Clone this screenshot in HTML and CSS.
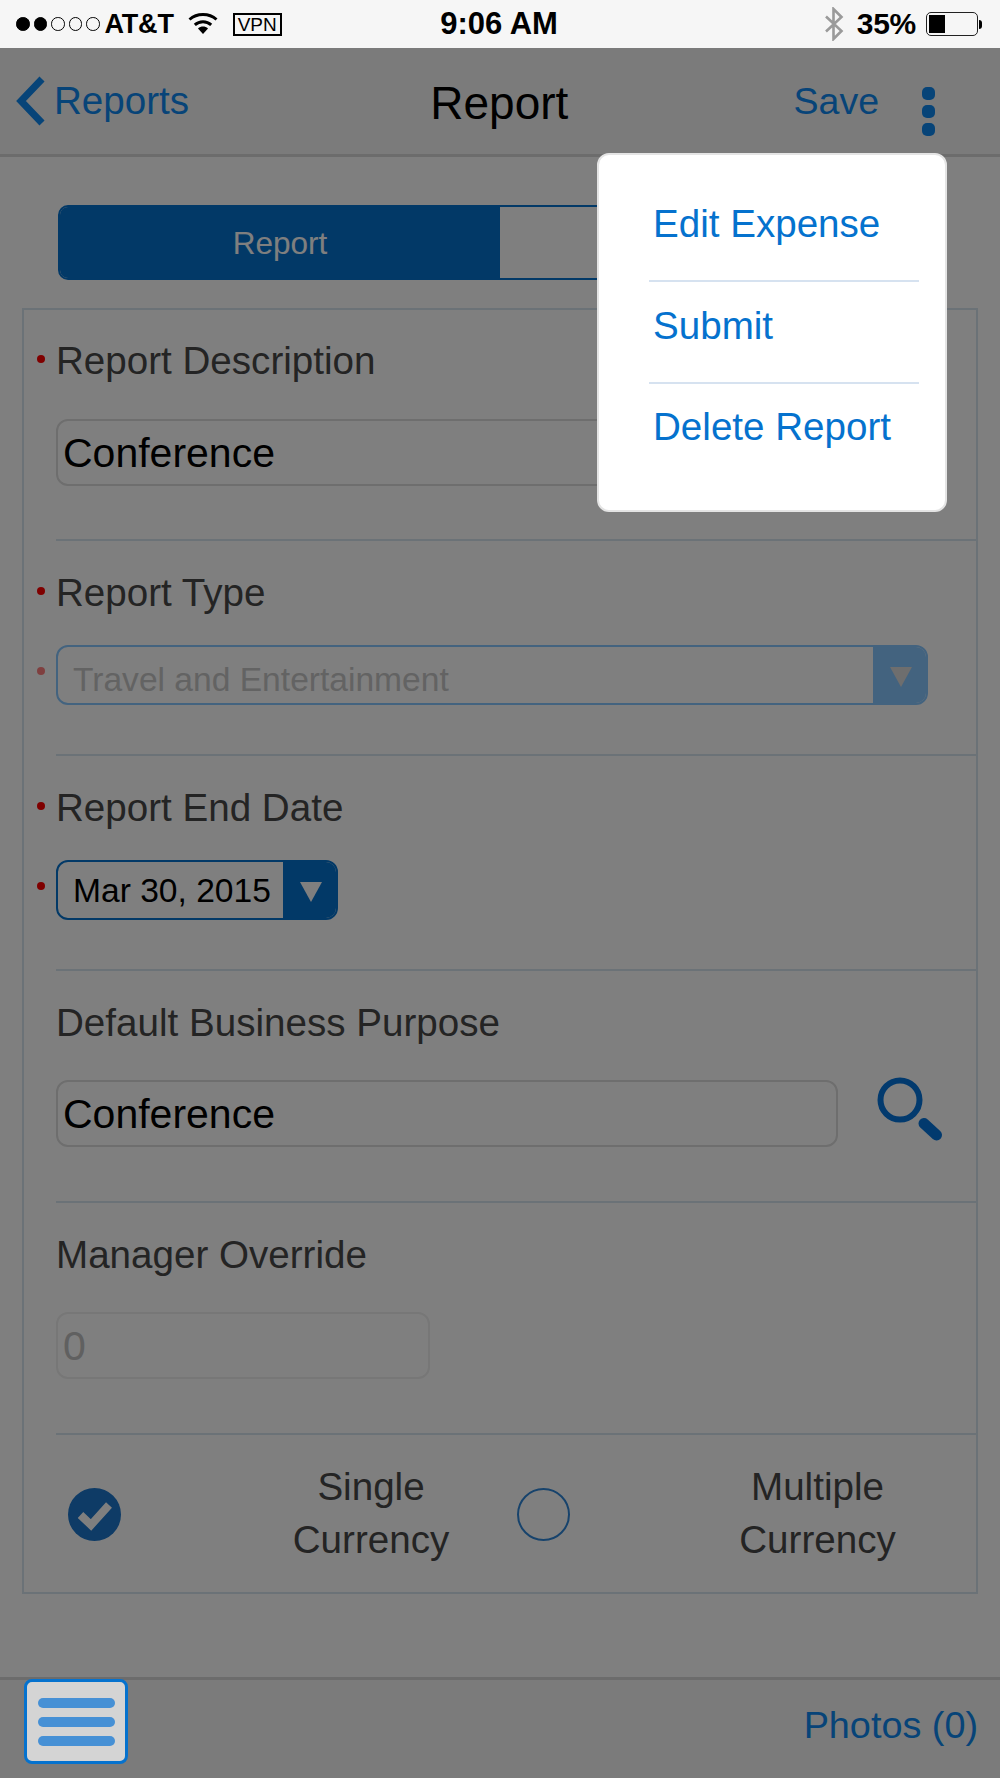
FILE: index.html
```html
<!DOCTYPE html>
<html lang="en">
<head>
<meta charset="utf-8">
<title>Report</title>
<link rel="stylesheet" href="styles.css">
</head>
<body>
<div class="app">
  <header class="status">
    <div class="status-left">
      <span class="signal"><i class="on"></i><i class="on"></i><i></i><i></i><i></i></span>
      <span class="carrier">AT&amp;T</span>
      <svg class="wifi" viewBox="0 0 30 24" aria-hidden="true">
        <path d="M1.5 7.5C9 .8 21 .8 28.5 7.5" fill="none" stroke="#000" stroke-width="3"/>
        <path d="M6.8 12.8C11.5 8.6 18.5 8.6 23.2 12.8" fill="none" stroke="#000" stroke-width="3"/>
        <path d="M10 16.5c3-2.6 7-2.6 10 0L15 22z" fill="#000"/>
      </svg>
      <span class="vpn">VPN</span>
    </div>
    <div class="clock">9:06 AM</div>
    <div class="status-right">
      <svg class="bt" viewBox="0 0 20 34" aria-hidden="true">
        <path d="M2 9.5 17.5 24 9.5 32V2l8 8L2 24.5" fill="none" stroke="#9a9a9a" stroke-width="2.6"/>
      </svg>
      <span class="pct">35%</span>
      <span class="battery"><span class="battery-fill"></span></span>
      <span class="battery-nub"></span>
    </div>
  </header>

  <nav class="nav">
    <a class="back">
      <svg class="chevron" viewBox="0 0 30 50" aria-hidden="true">
        <path d="M26 3 5 25l21 22" fill="none" stroke="currentColor" stroke-width="7"/>
      </svg>
      <span>Reports</span>
    </a>
    <h1 class="title">Report</h1>
    <a class="save">Save</a>
    <span class="kebab"><i></i><i></i><i></i></span>
  </nav>

  <main class="content">
    <div class="segments">
      <div class="segment segment-on">Report</div>
      <div class="segment"></div>
    </div>

    <section class="panel">
      <div class="row row-first">
        <div class="label"><i class="req"></i>Report Description</div>
        <div class="field-line">
          <div class="input">Conference</div>
          <svg class="search" viewBox="0 0 66 66" aria-hidden="true"><circle cx="23" cy="23" r="19.5" fill="none" stroke="currentColor" stroke-width="6"/><path d="M47 46.5 59.500 58" fill="none" stroke="currentColor" stroke-width="11" stroke-linecap="round"/></svg>
        </div>
      </div>

      <div class="row">
        <div class="label"><i class="req"></i>Report Type</div>
        <div class="select-line">
          <i class="req req-dim"></i>
          <div class="select select-off">
            <span class="select-text">Travel and Entertainment</span>
            <span class="select-arrow"><i class="tri"></i></span>
          </div>
        </div>
      </div>

      <div class="row">
        <div class="label"><i class="req"></i>Report End Date</div>
        <div class="select-line">
          <i class="req"></i>
          <div class="select select-date">
            <span class="select-text">Mar 30, 2015</span>
            <span class="select-arrow"><i class="tri"></i></span>
          </div>
        </div>
      </div>

      <div class="row row-tall">
        <div class="label">Default Business Purpose</div>
        <div class="field-line">
          <div class="input">Conference</div>
          <svg class="search" viewBox="0 0 66 66" aria-hidden="true"><circle cx="23" cy="23" r="19.5" fill="none" stroke="currentColor" stroke-width="6"/><path d="M47 46.5 59.500 58" fill="none" stroke="currentColor" stroke-width="11" stroke-linecap="round"/></svg>
        </div>
      </div>

      <div class="row row-tall">
        <div class="label">Manager Override</div>
        <div class="input input-off">0</div>
      </div>

      <div class="currency">
        <svg class="radio" viewBox="0 0 53 53" aria-hidden="true"><circle cx="26.5" cy="26.500" r="26.5" fill="#1c76cc"/><path d="M12.500 27 23 37 41 17" fill="none" stroke="#fff" stroke-width="8"/></svg>
        <div class="currency-name currency-a">Single<br>Currency</div>
        <svg class="radio" viewBox="0 0 53 53" aria-hidden="true"><circle cx="26.5" cy="26.5" r="25.5" fill="none" stroke="#2f86d8" stroke-width="2"/></svg>
        <div class="currency-name currency-b">Multiple<br>Currency</div>
      </div>
    </section>
  </main>

  <footer class="footer">
    <button class="menu-btn" type="button" aria-label="Menu"><i></i><i></i><i></i></button>
    <a class="photos">Photos (0)</a>
  </footer>

  <div class="overlay"></div>

  <ul class="popup">
    <li>Edit Expense</li>
    <li>Submit</li>
    <li>Delete Report</li>
  </ul>
</div>
</body>
</html>
```

FILE: styles.css
```css
* { box-sizing: border-box; }
html, body { margin: 0; padding: 0; }
body { font-family: "Liberation Sans", Arial, sans-serif; background: #fff; }
i { display: block; }

.app { position: relative; width: 1000px; height: 1778px; display: flex; flex-direction: column; overflow: hidden; }

/* status bar */
.status { height: 48px; background: #f6f6f6; display: grid; grid-template-columns: 1fr auto 1fr; align-items: center; padding: 0 18px 0 16px; color: #000; flex: none; }
.status-left { display: flex; align-items: center; }
.signal { display: flex; gap: 4px; }
.signal i { width: 13.5px; height: 13.5px; border-radius: 50%; border: 1px solid #000; }
.signal i.on { background: #000; }
.carrier { font-size: 27px; font-weight: 700; margin-left: 5px; letter-spacing: -.2px; }
.wifi { width: 30px; height: 24px; margin-left: 14px; }
.vpn { margin-left: 15px; width: 49px; height: 23px; border: 2px solid #000; font-size: 19px; line-height: 19px; text-align: center; }
.clock { font-size: 31px; font-weight: 700; }
.status-right { display: flex; align-items: center; justify-content: flex-end; }
.bt { width: 20px; height: 34px; }
.pct { font-size: 30px; font-weight: 700; margin-left: 13px; letter-spacing: -.3px; }
.battery { width: 52px; height: 24px; margin-left: 10px; border: 1.5px solid #222; border-radius: 5px; padding: 2px; display: block; }
.battery-fill { display: block; width: 16px; height: 100%; background: #000; }
.battery-nub { width: 3px; height: 9px; margin-left: 1px; background: #000; border-radius: 0 4px 4px 0; }

/* nav */
.nav { height: 109px; flex: none; background: #f6f6f6; border-bottom: 3px solid #d8d8d8; display: flex; align-items: flex-start; position: relative; color: #0e88f0; font-size: 38.6px; }
.back { display: flex; align-items: center; margin-left: 16px; margin-top: 28px; height: 50px; }
.chevron { width: 30px; height: 50px; }
.back span { margin-left: 8px; }
.title { flex: 1; margin: 28px 0 0; font-size: 46px; font-weight: 400; color: #000; text-align: center; line-height: 54px; padding-left: 16px; }
.save { margin-top: 31px; line-height: 44px; font-size: 37.5px; }
.kebab { display: flex; flex-direction: column; gap: 5px; margin: 39px 65px 0 43px; }
.kebab i { width: 13px; height: 13px; border-radius: 5px; background: currentColor; }

/* content */
.content { flex: 1; padding: 48px 22px 0; background: #fff; }
.segments { display: flex; height: 75px; margin: 0 36px; border-radius: 10px; border: 2px solid #0572ce; overflow: hidden; width: 846px; }
.segment { flex: 1; display: flex; align-items: center; justify-content: center; font-size: 31.5px; color: #0572ce; padding-top: 2px; }
.segment-on { background: #0572ce; color: #fff; flex: none; width: 440px; }

.panel { margin-top: 28px; height: 1286px; border: 2px solid #d6e4ee; display: flex; flex-direction: column; }
.row { height: 215px; margin-left: 32px; padding-top: 31px; border-bottom: 2px solid #d6e4ee; flex: none; color: #484848; }
.row-first { height: 231px; padding-top: 30px; }
.row-tall { height: 232px; }
.label { height: 42px; line-height: 42px; font-size: 38.6px; display: flex; align-items: center; margin-bottom: 31px; }
.row-first .label { margin-bottom: 37px; }
.row-tall .label { margin-bottom: 36px; }
.req { width: 8px; height: 8px; border-radius: 50%; background: #ff0000; flex: none; margin: -4px 11px 0 -19px; }
.req-dim { opacity: .5; }

.field-line { display: flex; align-items: center; color: #0474dc; }
.input { width: 782px; height: 67px; border: 2px solid #dcdcdc; border-radius: 12px; padding-left: 5px; color: #000; font-size: 41px; line-height: 64px; }
.input-off { width: 374px; color: #c0c0c0; border-color: #eee; }
.search { width: 66px; height: 66px; margin: -8px 0 0 39px; }

.select-line { display: flex; align-items: center; }
.select-line .req { margin-top: -8px; }
.select { display: flex; height: 60px; border: 2px solid #0572ce; border-radius: 12px; overflow: hidden; }
.select-text { flex: 1; font-size: 33.6px; line-height: 58px; padding-left: 15px; white-space: nowrap; }
.select-arrow { width: 55px; background: #0572ce; display: flex; align-items: center; justify-content: center; margin: -2px -2px -2px 0; }
.tri { width: 0; height: 0; border-left: 11px solid transparent; border-right: 11px solid transparent; border-top: 20px solid #fff; margin-top: 4px; }
.select-off { width: 872px; border-color: #86c6ff; }
.select-off .select-text { color: #c6c6c6; line-height: 65px; }
.select-off .select-arrow { background: #86c6ff; }
.select-off .tri { border-top-color: #dcdcdc; }
.select-date { width: 282px; }
.select-date .select-text { color: #000; }

.currency { flex: 1; display: grid; grid-template-columns: 53px 396px 53px 1fr; align-items: center; padding: 2px 0 0 44px; color: #484848; }
.currency-name { font-size: 38.6px; line-height: 53px; text-align: center; margin-bottom: 4px; }
.currency-a { padding-left: 104px; }
.currency-b { padding-left: 89px; }

/* footer */
.footer { height: 101px; flex: none; background: #f6f6f6; border-top: 3px solid #d8d8d8; display: flex; justify-content: space-between; padding: 0 22px 0 24px; color: #0e88f0; }
.menu-btn { position: relative; z-index: 2; width: 104px; height: 85px; padding: 0; margin: -1px 0 0; background: #d4d4d4; border: 3px solid #0572ce; border-radius: 8px; display: flex; flex-direction: column; align-items: center; justify-content: center; gap: 9px; }
.menu-btn i { width: 77px; height: 10px; border-radius: 5px; background: #4690d5; }
.photos { font-size: 37.8px; line-height: 42px; margin-top: 24px; }

/* overlay and popup */
.overlay { position: absolute; left: 0; right: 0; top: 48px; bottom: 0; background: rgba(0, 0, 0, .5); z-index: 1; }
.popup { position: absolute; z-index: 3; left: 597px; top: 153px; width: 350px; height: 359px; margin: 0; padding: 21px 26px 0 50px; list-style: none; background: #fff; border: 2px solid #e4e4e4; border-radius: 12px; color: #0572ce; font-size: 38.6px; }
.popup li { height: 102px; padding: 23px 0 0 4px; line-height: 42px; border-bottom: 2px solid #d6e2f0; }
.popup li:first-child { height: 106px; padding-top: 27px; }
.popup li:last-child { border-bottom: 0; padding-top: 22px; }
```
